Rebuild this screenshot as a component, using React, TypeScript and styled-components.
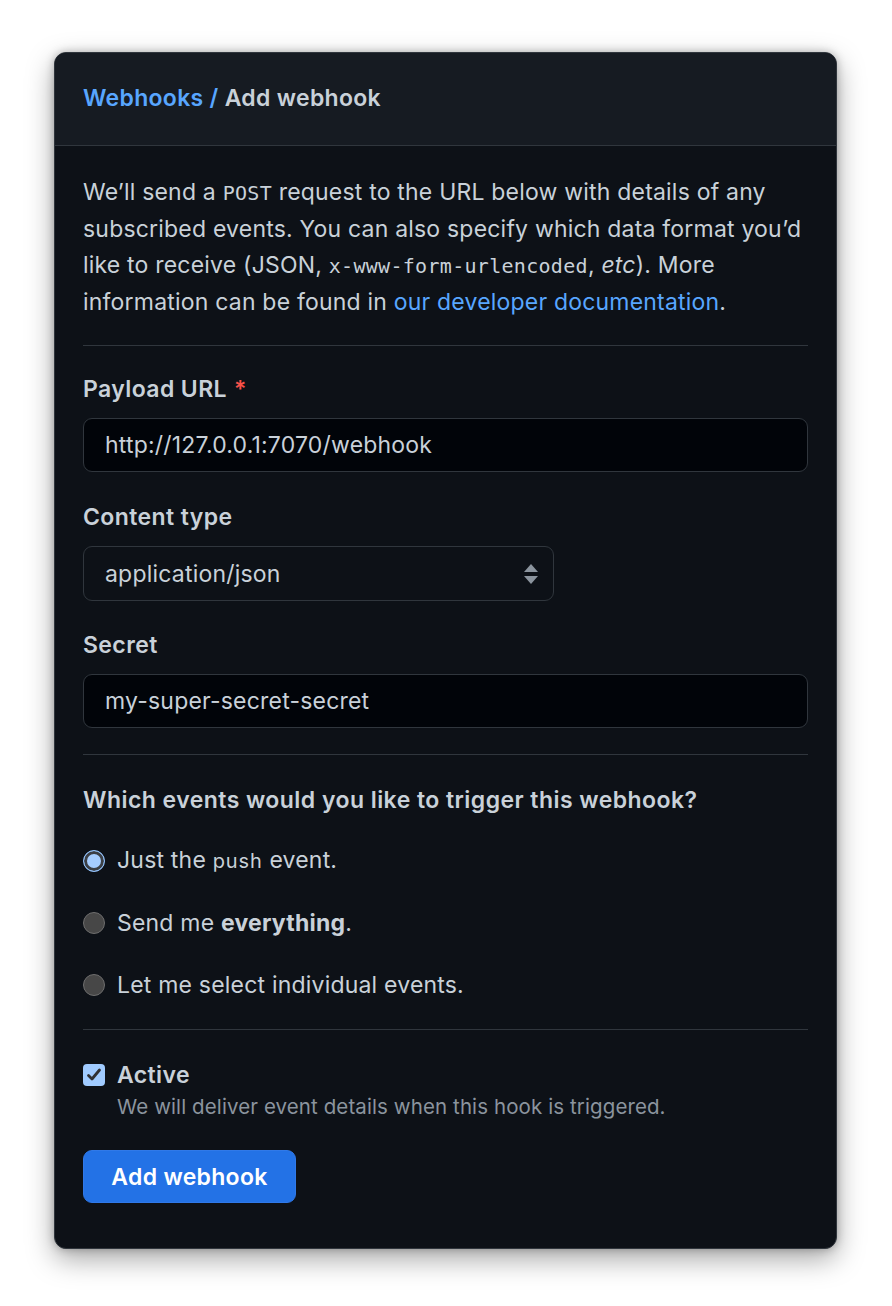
import React from "react";
import styled, { createGlobalStyle } from "styled-components";

const GlobalStyle = createGlobalStyle`
  html, body {
    margin: 0;
    padding: 0;
    background: #ffffff;
  }
  body {
    font-family: Inter, "Noto Sans", "Liberation Sans", sans-serif;
    -webkit-font-smoothing: antialiased;
  }
`;

const Page = styled.div`
  box-sizing: border-box;
  width: 892px;
  height: 1306px;
  padding: 52px 0 0 54px;
`;

const Card = styled.div`
  box-sizing: border-box;
  width: 783px;
  height: 1197px;
  background: #0d1117;
  border: 1px solid #30363d;
  border-radius: 12px;
  overflow: hidden;
  box-shadow: 0 10px 28px rgba(0, 0, 0, 0.35), 0 0 8px rgba(0, 0, 0, 0.25);
  color: #c9d1d9;
`;

const Header = styled.div`
  box-sizing: border-box;
  height: 93px;
  display: flex;
  align-items: center;
  padding: 0 28px 3px;
  background: #161b22;
  border-bottom: 1px solid #30363d;
  font-size: 23px;
  font-weight: 600;
  letter-spacing: 0.3px;
  color: #c9d1d9;
`;

const Crumb = styled.span`
  color: #58a6ff;
`;

const Body = styled.div`
  padding: 28px 28px 0 28px;
`;

const Intro = styled.p`
  margin: 0;
  font-size: 23px;
  line-height: 36px;
  letter-spacing: 0.2px;
`;

const Mono = styled.code`
  font-family: "DejaVu Sans Mono", "Liberation Mono", monospace;
  font-size: 20px;
  letter-spacing: 0.3px;
`;

const Link = styled.a`
  color: #58a6ff;
  text-decoration: none;
`;

const Divider = styled.hr<{ $top: number; $bottom: number }>`
  border: 0;
  height: 1px;
  background: #30363d;
  margin: ${(p) => `${p.$top}px 0 ${p.$bottom}px`};
`;

const Field = styled.div<{ $gap?: number }>`
  display: flex;
  flex-direction: column;
  margin-top: ${(p) => `${p.$gap ?? 0}px`};
`;

const Label = styled.label`
  font-size: 23px;
  font-weight: 600;
  letter-spacing: 0.4px;
  line-height: 30px;
  margin-bottom: 14px;
`;

const Required = styled.span`
  color: #f85149;
  margin-left: 7px;
`;

const Input = styled.div<{ $width?: number }>`
  box-sizing: border-box;
  width: ${(p) => (p.$width ? `${p.$width}px` : "100%")};
  height: 54px;
  display: flex;
  align-items: center;
  padding: 0 21px;
  background: #010409;
  border: 1.5px solid #30363d;
  border-radius: 9px;
  font-size: 23px;
  letter-spacing: 0.2px;
  color: #c9d1d9;
`;

const Select = styled(Input)`
  height: 55px;
  background: #0d1117;
  justify-content: space-between;
  padding-right: 14px;
`;

const Question = styled.div`
  font-size: 23px;
  font-weight: 600;
  letter-spacing: 0.45px;
  line-height: 30px;
  margin-bottom: 30px;
`;

const OptionList = styled.div`
  display: flex;
  flex-direction: column;
  gap: 32px;
`;

const Option = styled.div`
  display: flex;
  align-items: center;
  gap: 12px;
  font-size: 23px;
  letter-spacing: 0.2px;
  line-height: 30px;
`;

const Radio = styled.span<{ $checked?: boolean }>`
  box-sizing: border-box;
  width: 22px;
  height: 22px;
  flex: none;
  border-radius: 50%;
  ${(p) =>
    p.$checked
      ? `background: #a5cdff;
         border: 1.5px solid #8fc0fa;
         box-shadow: inset 0 0 0 3px #3b3f45;`
      : `background: #474747;
         border: 1.5px solid #6e6e6e;`}
`;

const Code = styled.span`
  font-size: 20px;
  letter-spacing: 0.9px;
`;

const CheckRow = styled.div`
  display: flex;
  align-items: flex-start;
  gap: 12px;
`;

const Checkbox = styled.span`
  box-sizing: border-box;
  width: 22px;
  height: 22px;
  flex: none;
  margin-top: 4px;
  border-radius: 4px;
  background: #a0cbff;
  display: flex;
  align-items: center;
  justify-content: center;
`;

const CheckText = styled.div`
  display: flex;
  flex-direction: column;
`;

const CheckTitle = styled.span`
  font-size: 23px;
  font-weight: 600;
  letter-spacing: 0.4px;
  line-height: 30px;
`;

const Note = styled.span`
  font-size: 20.5px;
  letter-spacing: 0.1px;
  line-height: 34px;
  color: #8b949e;
`;

const Button = styled.button`
  box-sizing: border-box;
  margin-top: 26px;
  width: 213px;
  height: 53px;
  border: 1px solid #3079e8;
  border-radius: 9px;
  background: #2372e6;
  color: #ffffff;
  font-family: inherit;
  font-size: 23px;
  font-weight: 600;
  letter-spacing: 0.3px;
  padding: 0;
`;

function SelectArrows() {
  return (
    <svg width="16" height="22" viewBox="0 0 16 22">
      <path d="M8 1 L15 9 H1 Z" fill="#8b949e" />
      <path d="M8 21 L15 13 H1 Z" fill="#8b949e" />
    </svg>
  );
}

function CheckMark() {
  return (
    <svg width="16" height="16" viewBox="0 0 16 16">
      <path
        d="M2.5 8.5 L6 12 L13.5 3"
        fill="none"
        stroke="#2f3033"
        strokeWidth="2.8"
        strokeLinecap="round"
        strokeLinejoin="round"
      />
    </svg>
  );
}

export default function App() {
  return (
    <>
      <GlobalStyle />
      <Page>
        <Card>
          <Header>
            <Crumb>Webhooks /</Crumb>&nbsp;Add webhook
          </Header>
          <Body>
            <Intro>
              We’ll send a <Mono>POST</Mono> request to the URL below with
              details of any subscribed events. You can also specify which data
              format you’d like to receive (JSON,{" "}
              <Mono>x-www-form-urlencoded</Mono>, <em>etc</em>). More
              information can be found in{" "}
              <Link>our developer documentation</Link>.
            </Intro>
            <Divider $top={25} $bottom={28} />
            <Field>
              <Label>
                Payload URL<Required>*</Required>
              </Label>
              <Input>http://127.0.0.1:7070/webhook</Input>
            </Field>
            <Field $gap={30}>
              <Label>Content type</Label>
              <Select $width={471}>
                application/json
                <SelectArrows />
              </Select>
            </Field>
            <Field $gap={29}>
              <Label>Secret</Label>
              <Input>my-super-secret-secret</Input>
            </Field>
            <Divider $top={26} $bottom={30} />
            <Question>Which events would you like to trigger this webhook?</Question>
            <OptionList>
              <Option>
                <Radio $checked />
                <span>
                  Just the <Code>push</Code> event.
                </span>
              </Option>
              <Option>
                <Radio />
                <span>
                  Send me <b>everything</b>.
                </span>
              </Option>
              <Option>
                <Radio />
                <span>Let me select individual events.</span>
              </Option>
            </OptionList>
            <Divider $top={29} $bottom={30} />
            <CheckRow>
              <Checkbox>
                <CheckMark />
              </Checkbox>
              <CheckText>
                <CheckTitle>Active</CheckTitle>
                <Note>We will deliver event details when this hook is triggered.</Note>
              </CheckText>
            </CheckRow>
            <Button>Add webhook</Button>
          </Body>
        </Card>
      </Page>
    </>
  );
}
